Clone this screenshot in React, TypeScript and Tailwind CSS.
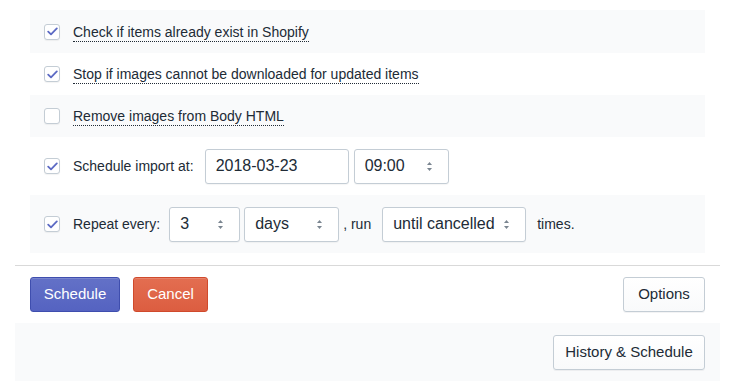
const font = { fontFamily: "'Liberation Sans', Arial, sans-serif" };

const Check = ({ checked }: { checked: boolean }) => (
  <span className="flex h-[16px] w-[16px] shrink-0 items-center justify-center rounded-[3px] border border-[#c4cdd5] bg-white shadow-[0_1px_1px_rgba(0,0,0,0.05)]">
    {checked && (
      <svg width="11" height="9" viewBox="0 0 11 9" fill="none">
        <path d="M1.2 4.6 L4 7.3 L9.8 1.4" stroke="#5c6ac4" strokeWidth="1.8" strokeLinecap="round" strokeLinejoin="round" />
      </svg>
    )}
  </span>
);

const Arrows = () => (
  <svg width="7" height="11" viewBox="0 0 7 11" className="shrink-0">
    <path d="M3.5 1 L6 4 H1 Z" fill="#7a8590" />
    <path d="M3.5 10 L6 7 H1 Z" fill="#7a8590" />
  </svg>
);

const Select = ({ value, width }: { value: string; width: string }) => (
  <div
    className={`flex h-[35px] ${width} items-center justify-between rounded-[3px] border border-[#c4cdd5] bg-white pl-[10px] pr-[15px] text-[16px] text-[#212b36] shadow-[0_1px_1px_rgba(0,0,0,0.04)]`}
  >
    <span>{value}</span>
    <Arrows />
  </div>
);

const Label = ({ children }: { children: string }) => (
  <span className="mt-[2px] border-b border-dotted border-[#212b36] leading-[17px] text-[#212b36]">{children}</span>
);

export default function App() {
  return (
    <div className="min-h-[390px] w-[730px] bg-white text-[14px]" style={font}>
      <div className="pl-[15px] pr-[10px] pt-[10px]">
        <div className="px-[15px]">
          <div className="flex h-[43px] items-center gap-[13px] bg-[#f9fafb] pl-[14px]">
            <Check checked />
            <Label>Check if items already exist in Shopify</Label>
          </div>
          <div className="flex h-[42px] items-center gap-[13px] pl-[14px]">
            <Check checked />
            <Label>Stop if images cannot be downloaded for updated items</Label>
          </div>
          <div className="flex h-[42px] items-center gap-[13px] bg-[#f9fafb] pl-[14px]">
            <Check checked={false} />
            <Label>Remove images from Body HTML</Label>
          </div>
          <div className="flex h-[58px] items-center pl-[14px] text-[#212b36]">
            <Check checked />
            <span className="ml-[13px] mr-[11px]">Schedule import at:</span>
            <div className="flex h-[35px] w-[144px] items-center rounded-[3px] border border-[#c4cdd5] bg-white pl-[10px] text-[16px] shadow-[0_1px_1px_rgba(0,0,0,0.04)]">
              2018-03-23
            </div>
            <div className="ml-[5px]">
              <Select value="09:00" width="w-[95px]" />
            </div>
          </div>
          <div className="flex h-[58px] items-center bg-[#f9fafb] pl-[14px] text-[#212b36]">
            <Check checked />
            <span className="ml-[13px] mr-[9px]">Repeat every:</span>
            <Select value="3" width="w-[71px]" />
            <div className="ml-[4px]">
              <Select value="days" width="w-[95px]" />
            </div>
            <span className="ml-[4px] mr-[11px]">, run</span>
            <Select value="until cancelled" width="w-[144px]" />
            <span className="ml-[11px]">times.</span>
          </div>
        </div>
        <div className="mt-[12px] border-t border-[#d9d9d9]" />
        <div className="flex items-center justify-between px-[15px] pt-[11px] pb-[11px]">
          <div className="flex gap-[13px]">
            <button className="h-[35px] w-[90px] rounded-[3px] border border-[#3f4eae] bg-gradient-to-b from-[#6371c7] to-[#5563c1] text-[15px] text-white shadow-[inset_0_1px_0_rgba(255,255,255,0.15)]">
              Schedule
            </button>
            <button className="h-[35px] w-[75px] rounded-[3px] border border-[#d04a2c] bg-gradient-to-b from-[#e36e51] to-[#dc5d40] text-[15px] text-white shadow-[inset_0_1px_0_rgba(255,255,255,0.15)]">
              Cancel
            </button>
          </div>
          <button className="h-[35px] w-[82px] rounded-[3px] border border-[#c4cdd5] bg-gradient-to-b from-white to-[#f9fafb] text-[15px] text-[#212b36] shadow-[0_1px_0_rgba(22,29,37,0.05)]">
            Options
          </button>
        </div>
        <div className="flex h-[58px] items-center justify-end bg-[#f9fafb] pr-[15px]">
          <button className="h-[35px] w-[152px] rounded-[3px] border border-[#c4cdd5] bg-gradient-to-b from-white to-[#f9fafb] text-[15px] text-[#212b36] shadow-[0_1px_0_rgba(22,29,37,0.05)]">
            History &amp; Schedule
          </button>
        </div>
      </div>
    </div>
  );
}
